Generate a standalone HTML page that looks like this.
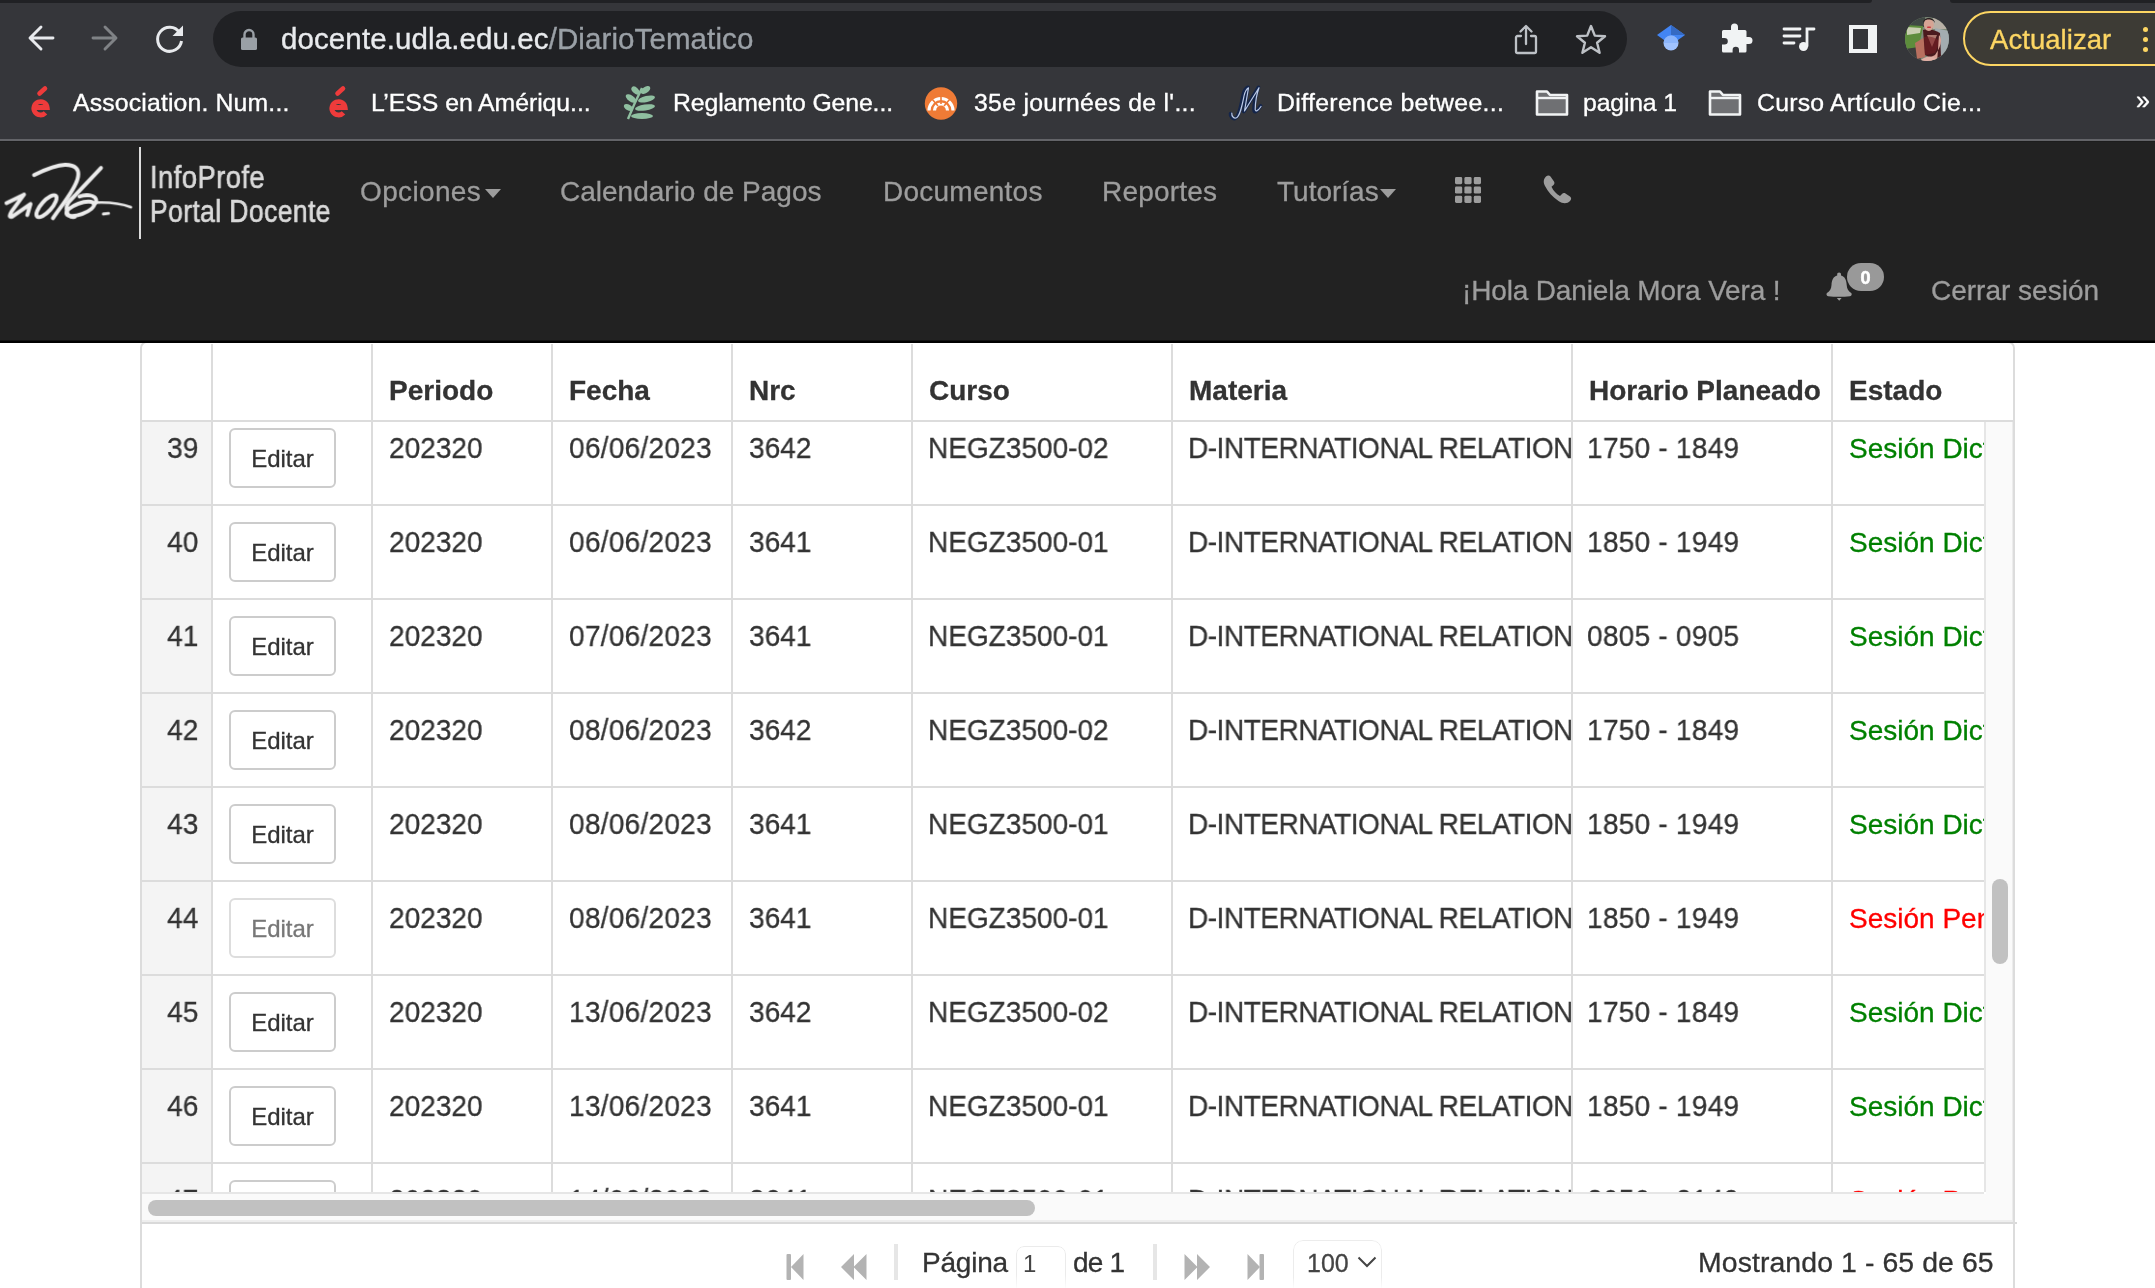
<!DOCTYPE html>
<html><head><meta charset="utf-8"><title>DiarioTematico</title>
<style>
html,body{margin:0;padding:0;}
body{width:2155px;height:1288px;overflow:hidden;position:relative;background:#ffffff;font-family:"Liberation Sans", sans-serif;}
.a{position:absolute;}
.t{position:absolute;white-space:pre;font-family:"Liberation Sans", sans-serif;will-change:transform;}
.c{-webkit-text-stroke:0.35px currentColor;}
.p{-webkit-text-stroke:0.3px currentColor;}
svg.a{overflow:visible;}
</style></head><body>
<div class="a" style="left:0px;top:0px;width:2155px;height:139px;background:#35363a"></div><div class="a" style="left:0px;top:0px;width:1872px;height:3px;background:#202124;border-bottom-right-radius:6px"></div><div class="a" style="left:1950px;top:0px;width:205px;height:3px;background:#202124;border-bottom-left-radius:6px"></div><div class="a" style="left:0px;top:139px;width:2155px;height:2px;background:#636468"></div><div class="a" style="left:0px;top:141px;width:2155px;height:1px;background:#1d1d1d"></div><svg class="a" style="left:26px;top:23px;" width="30" height="30" viewBox="0 0 30 30"><path d="M27 15H5 M15 4L4 15L15 26" stroke="#e8eaed" stroke-width="2.9" fill="none" stroke-linecap="round" stroke-linejoin="round"/></svg><svg class="a" style="left:90px;top:23px;" width="30" height="30" viewBox="0 0 30 30"><path d="M3 15H25 M15 4L26 15L15 26" stroke="#808386" stroke-width="2.9" fill="none" stroke-linecap="round" stroke-linejoin="round"/></svg><svg class="a" style="left:153px;top:22px;" width="34" height="34" viewBox="0 0 34 34"><path d="M26.5 10.5A12 12 0 1 0 28.5 19" stroke="#e8eaed" stroke-width="3" fill="none"/><path d="M30 3.5V14H19.5Z" fill="#e8eaed"/></svg><div class="a" style="left:213px;top:11px;width:1414px;height:56px;background:#202124;border-radius:28px"></div><svg class="a" style="left:240px;top:28px;" width="18" height="23" viewBox="0 0 18 23"><path d="M4.5 10V6.5a4.5 4.5 0 0 1 9 0V10" stroke="#9aa0a6" stroke-width="2.4" fill="none"/><rect x="1" y="9.5" width="16" height="12.5" rx="1.6" fill="#9aa0a6"/></svg><div class="t c" style="left:281px;top:24.32px;font-size:29.5px;line-height:29.5px;color:#e8eaed;font-weight:400;letter-spacing:0.1px"><span style="color:#e8eaed">docente.udla.edu.ec</span><span style="color:#9aa0a6">/DiarioTematico</span></div><svg class="a" style="left:1513px;top:23px;" width="28" height="33" viewBox="0 0 28 33"><path d="M8 13H4.5a1.5 1.5 0 0 0-1.5 1.5v14a1.5 1.5 0 0 0 1.5 1.5h17a1.5 1.5 0 0 0 1.5-1.5v-14a1.5 1.5 0 0 0-1.5-1.5H18" stroke="#bdc1c6" stroke-width="2.3" fill="none" stroke-linecap="round"/><path d="M13 21V3.5 M7.5 8.5L13 3L18.5 8.5" stroke="#bdc1c6" stroke-width="2.3" fill="none" stroke-linecap="round" stroke-linejoin="round"/></svg><svg class="a" style="left:1574px;top:23px;" width="34" height="32" viewBox="0 0 34 32"><path d="M17 3L20.8 12.6L31 13.3L23.1 19.8L25.6 29.8L17 24.3L8.4 29.8L10.9 19.8L3 13.3L13.2 12.6Z" stroke="#bdc1c6" stroke-width="2.4" fill="none" stroke-linejoin="round"/></svg><svg class="a" style="left:1655px;top:23px;" width="32" height="30" viewBox="0 0 32 30"><path d="M16 2L30 12H2Z" fill="#4285f4"/><path d="M16 2L30 12H16Z" fill="#356ac3"/><path d="M2 12L16 22L30 12Z" fill="#4285f4"/><circle cx="16" cy="20" r="7.5" fill="#a0c3ff"/><path d="M8.5 20a7.5 7.5 0 0 1 15 0" fill="#76a7fa" opacity="0.5"/></svg><svg class="a" style="left:1719px;top:22px;" width="32" height="33" viewBox="0 0 32 33"><path d="M12 5a3.5 3.5 0 0 1 7 0V8h7a1.5 1.5 0 0 1 1.5 1.5V15H30a3.5 3.5 0 0 1 0 7h-2.5v7a1.5 1.5 0 0 1-1.5 1.5h-6V28a3.2 3.2 0 0 0-6.4 0v2.5H4.5A1.5 1.5 0 0 1 3 29v-6.5h2.5a3.3 3.3 0 0 0 0-6.6H3V9.5A1.5 1.5 0 0 1 4.5 8H12Z" fill="#f1f3f4"/></svg><svg class="a" style="left:1781px;top:25px;" width="36" height="28" viewBox="0 0 36 28"><path d="M3 4H19 M3 11H19 M3 18H13" stroke="#f1f3f4" stroke-width="2.8" stroke-linecap="round"/><path d="M26 21V4H33" stroke="#f1f3f4" stroke-width="2.8" fill="none" stroke-linecap="round"/><circle cx="22.5" cy="21.5" r="4.5" fill="#f1f3f4"/></svg><svg class="a" style="left:1849px;top:25px;" width="28" height="28" viewBox="0 0 28 28"><rect x="0" y="0" width="28" height="28" fill="#f1f3f4"/><rect x="4" y="4" width="15" height="20" fill="#35363a"/></svg><svg class="a" style="left:1905px;top:17px;" width="44" height="44" viewBox="0 0 44 44"><defs><clipPath id="avc"><circle cx="22" cy="22" r="22"/></clipPath></defs><g clip-path="url(#avc)"><rect width="44" height="44" fill="#7d8a78"/><rect x="0" y="0" width="20" height="10" fill="#3f4843"/><rect x="28" y="0" width="16" height="12" fill="#b8b0a6"/><path d="M0 8L18 9L14 30L0 34Z" fill="#5d8d3c"/><path d="M2 10L16 11L15 16L2 18Z" fill="#c9cfb0"/><path d="M30 11L44 14V40L32 40Z" fill="#a3acb0"/><path d="M0 32L14 30L16 44H0Z" fill="#3c3d3c"/><path d="M10 26L20 20L20 40L12 42Z" fill="#b8705f"/><path d="M18 13C22 11 30 13 35 16L36 40L28 42L20 38Z" fill="#4a1a1e"/><path d="M22 18L27 30L32 18" fill="#d9a090" opacity="0.7"/><path d="M19 20C26 18 32 22 35 24L30 36L20 38Z" fill="#7a1f25" opacity="0.55"/><path d="M34 18C38 22 36 30 30 38L22 42L14 45L32 46Z" fill="#d8a397"/><path d="M15 44C20 38 30 38 33 44Z" fill="#e0b0a6"/><ellipse cx="23.8" cy="7.5" rx="5" ry="6.5" fill="#d6a494"/><path d="M18 6C18 0 29 -1 30 6L28.5 4C26 2 21 2 19.5 4Z" fill="#2a2122"/><rect x="22" y="9.5" width="4" height="1.6" rx="0.8" fill="#c8383e"/></g></svg><div class="a" style="left:1963px;top:11px;width:260px;height:51px;border:2px solid #fdd663;border-radius:28px;background:#3d3b35"></div><div class="t c" style="left:1989.5px;top:25.73px;font-size:27.5px;line-height:27.5px;color:#fdd663;font-weight:400;letter-spacing:0.05px">Actualizar</div><div class="a" style="left:2143px;top:27.0px;width:5px;height:5px;background:#fdd663;border-radius:50%"></div><div class="a" style="left:2143px;top:37.0px;width:5px;height:5px;background:#fdd663;border-radius:50%"></div><div class="a" style="left:2143px;top:47.0px;width:5px;height:5px;background:#fdd663;border-radius:50%"></div><svg class="a" style="left:31px;top:86px;" width="20" height="33" viewBox="0 0 20 33"><path d="M8.5 7.5L14 2.5" stroke="#ee3b3b" stroke-width="4.6" stroke-linecap="round"/><path d="M3.5 21.5H16.2A6.7 6.7 0 1 0 14.5 26.8" stroke="#ee3b3b" stroke-width="4.8" fill="none" stroke-linecap="butt"/></svg><svg class="a" style="left:329px;top:86px;" width="20" height="33" viewBox="0 0 20 33"><path d="M8.5 7.5L14 2.5" stroke="#ee3b3b" stroke-width="4.6" stroke-linecap="round"/><path d="M3.5 21.5H16.2A6.7 6.7 0 1 0 14.5 26.8" stroke="#ee3b3b" stroke-width="4.8" fill="none" stroke-linecap="butt"/></svg><div class="t c" style="left:73px;top:90.92px;font-size:24.8px;line-height:24.8px;color:#ffffff;font-weight:400;letter-spacing:0.15px">Association. Num...</div><div class="t c" style="left:371px;top:90.92px;font-size:24.8px;line-height:24.8px;color:#ffffff;font-weight:400;letter-spacing:-0.05px">L’ESS en Amériqu...</div><svg class="a" style="left:622px;top:86px;" width="38" height="34" viewBox="0 0 38 34"><path d="M6 33Q12 18 20 2" stroke="#8fbfa0" stroke-width="2.4" fill="none"/><ellipse cx="13.5" cy="4.5" rx="4.9" ry="3" transform="rotate(-135.0 13.5 4.5)" fill="#8fbfa0"/><ellipse cx="23.5" cy="4.0" rx="5.4" ry="3" transform="rotate(-33.7 23.5 4.0)" fill="#8fbfa0"/><ellipse cx="24.5" cy="13.0" rx="8.7" ry="3" transform="rotate(-13.2 24.5 13.0)" fill="#8fbfa0"/><ellipse cx="9.0" cy="12.5" rx="6.1" ry="3" transform="rotate(-145.0 9.0 12.5)" fill="#8fbfa0"/><ellipse cx="23.0" cy="21.5" rx="10.1" ry="3" transform="rotate(-8.5 23.0 21.5)" fill="#8fbfa0"/><ellipse cx="6.5" cy="21.5" rx="5.1" ry="3" transform="rotate(-150.9 6.5 21.5)" fill="#8fbfa0"/><ellipse cx="20.0" cy="30.0" rx="11.0" ry="3" transform="rotate(0.0 20.0 30.0)" fill="#8fbfa0"/></svg><div class="t c" style="left:673px;top:90.92px;font-size:24.8px;line-height:24.8px;color:#ffffff;font-weight:400;letter-spacing:-0.11px">Reglamento Gene...</div><svg class="a" style="left:924px;top:87px;" width="34" height="33" viewBox="0 0 34 33"><circle cx="17" cy="16.5" r="16.2" fill="#ef7b36"/><g stroke="#fff" stroke-width="3.2" fill="none"><path d="M5 23.5a12 12 0 0 1 24 0"/><path d="M10.5 23.5a6.5 6.5 0 0 1 13 0"/></g><g stroke="#ef7b36" stroke-width="1.6"><path d="M17 6V17"/><path d="M8 12L14 19"/><path d="M26 12L20 19"/></g></svg><div class="t c" style="left:973.5px;top:90.92px;font-size:24.8px;line-height:24.8px;color:#ffffff;font-weight:400;letter-spacing:0.3px">35e journées de l'...</div><svg class="a" style="left:1227px;top:86px;" width="36" height="34" viewBox="0 0 36 34"><path d="M3.5,27.6 C3,31 6,33 8,32.5 C12,31 14,20 16,10 C17,5 19,2 21,1.3 L16.8,25.5 L31.5,1.3 C29,8 27,18 27,24 C27,27 30,26 33.6,19.9" stroke="#14254a" stroke-width="3.6" fill="none" stroke-linejoin="round" stroke-linecap="round"/><path d="M4.8,27.2 C4.5,30.5 7,32.5 9,32 C13,30.5 15,20 17,10 C18,5.5 19.5,3 21.5,1.8 L17.5,25 L32,1.8 C29.8,8 28.3,18 28.2,23.5 C28.5,26 31,25 34,20.5" stroke="#b9c8e6" stroke-width="1.2" fill="none" stroke-linejoin="round" stroke-linecap="round"/></svg><div class="t c" style="left:1276.5px;top:90.92px;font-size:24.8px;line-height:24.8px;color:#ffffff;font-weight:400;letter-spacing:0.36px">Difference betwee...</div><svg class="a" style="left:1535px;top:89px;" width="34" height="28" viewBox="0 0 34 28"><path d="M2 25.5V2.5H12L15 6H32V25.5Z" stroke="#f1f3f4" stroke-width="2.6" fill="#6f7073" stroke-linejoin="round"/><path d="M2 9H32" stroke="#f1f3f4" stroke-width="2.4"/></svg><svg class="a" style="left:1708px;top:89px;" width="34" height="28" viewBox="0 0 34 28"><path d="M2 25.5V2.5H12L15 6H32V25.5Z" stroke="#f1f3f4" stroke-width="2.6" fill="#6f7073" stroke-linejoin="round"/><path d="M2 9H32" stroke="#f1f3f4" stroke-width="2.4"/></svg><div class="t c" style="left:1583px;top:90.92px;font-size:24.8px;line-height:24.8px;color:#ffffff;font-weight:400;letter-spacing:-0.16px">pagina 1</div><div class="t c" style="left:1756.5px;top:90.92px;font-size:24.8px;line-height:24.8px;color:#ffffff;font-weight:400;letter-spacing:0.23px">Curso Artículo Cie...</div><div class="t c" style="left:2136px;top:87.75px;font-size:25px;line-height:25px;color:#ffffff;font-weight:400;">»</div><div class="a" style="left:0px;top:142px;width:2155px;height:199px;background:#222222"></div><svg class="a" style="left:0px;top:150px" width="140" height="80" viewBox="0 0 2155 1231"><g stroke="#ebebeb" fill="none" stroke-width="60" stroke-linecap="round" stroke-linejoin="round" style="filter:blur(0.35px)"><path d="M100,815 L370,685 L175,950 Q120,1045 185,1025 L470,830 L420,1000"/><ellipse cx="715" cy="865" rx="215" ry="80" transform="rotate(-48 715 865)"/><path d="M815,1050 C950,850 1150,620 1195,440 C1235,290 1150,225 1000,228 C830,235 660,320 525,385"/><path d="M1555,275 L1060,800 C1000,870 1010,1050 1150,1030"/><ellipse cx="1235" cy="905" rx="225" ry="85" transform="rotate(-20 1235 905)"/><path d="M1225,715 C1320,680 1450,690 1475,755 C1490,800 1470,820 1450,830"/><path d="M1470,810 C1700,800 1880,830 2015,880" stroke-width="40"/><path d="M1590,985 L1670,975" stroke-width="45"/></g></svg><div class="a" style="left:139px;top:147px;width:2px;height:92px;background:#dcdcdc"></div><div class="t " style="left:150px;top:161.65px;font-size:31px;line-height:31px;color:#d9d9d9;font-weight:400;transform:scaleX(0.883);transform-origin:0 0;letter-spacing:0.5px;-webkit-text-stroke:0.7px #d9d9d9">InfoProfe</div><div class="t " style="left:150px;top:195.65px;font-size:31px;line-height:31px;color:#d9d9d9;font-weight:400;transform:scaleX(0.853);transform-origin:0 0;letter-spacing:0.5px;-webkit-text-stroke:0.7px #d9d9d9">Portal Docente</div><div class="t p" style="left:360px;top:178.20px;font-size:28px;line-height:28px;color:#9d9d9d;font-weight:400;letter-spacing:0.35px">Opciones</div><svg class="a" style="left:485px;top:189px;" width="16" height="10" viewBox="0 0 16 10"><path d="M0 0H16L8 9Z" fill="#9d9d9d"/></svg><div class="t p" style="left:560px;top:178.20px;font-size:28px;line-height:28px;color:#9d9d9d;font-weight:400;">Calendario de Pagos</div><div class="t p" style="left:882.5px;top:178.20px;font-size:28px;line-height:28px;color:#9d9d9d;font-weight:400;letter-spacing:0.25px">Documentos</div><div class="t p" style="left:1102px;top:178.20px;font-size:28px;line-height:28px;color:#9d9d9d;font-weight:400;letter-spacing:0.2px">Reportes</div><div class="t p" style="left:1276.5px;top:178.20px;font-size:28px;line-height:28px;color:#9d9d9d;font-weight:400;">Tutorías</div><svg class="a" style="left:1380px;top:189px;" width="15" height="9" viewBox="0 0 15 9"><path d="M0 0H16L8 9Z" fill="#9d9d9d"/></svg><svg class="a" style="left:1455px;top:177px;" width="26" height="26" viewBox="0 0 26 26"><rect x="0.0" y="0.0" width="7.2" height="7.2" rx="1.4" fill="#9d9d9d"/><rect x="9.4" y="0.0" width="7.2" height="7.2" rx="1.4" fill="#9d9d9d"/><rect x="18.8" y="0.0" width="7.2" height="7.2" rx="1.4" fill="#9d9d9d"/><rect x="0.0" y="9.4" width="7.2" height="7.2" rx="1.4" fill="#9d9d9d"/><rect x="9.4" y="9.4" width="7.2" height="7.2" rx="1.4" fill="#9d9d9d"/><rect x="18.8" y="9.4" width="7.2" height="7.2" rx="1.4" fill="#9d9d9d"/><rect x="0.0" y="18.8" width="7.2" height="7.2" rx="1.4" fill="#9d9d9d"/><rect x="9.4" y="18.8" width="7.2" height="7.2" rx="1.4" fill="#9d9d9d"/><rect x="18.8" y="18.8" width="7.2" height="7.2" rx="1.4" fill="#9d9d9d"/></svg><svg class="a" style="left:1540.5px;top:173px;" width="32" height="32" viewBox="0 0 32 32"><path d="M5 3.5C6.5 2 8.5 2 9.5 3.5L13 8.5C13.8 9.8 13.5 11 12.5 12L10.5 13.8C12.5 18 15 20.8 19 23L21 21C22 20 23.3 19.8 24.5 20.6L29 23.6C30.5 24.6 30.5 26.6 29 28C26 31 22 31 17.5 28C11.5 24 7 19 4 13C2 9 2.5 6 5 3.5Z" fill="#9d9d9d"/></svg><div class="t p" style="left:1462px;top:276.90px;font-size:28px;line-height:28px;color:#9d9d9d;font-weight:400;letter-spacing:-0.15px">¡Hola Daniela Mora Vera !</div><svg class="a" style="left:1826px;top:271px;" width="28" height="31" viewBox="0 0 28 31"><path d="M13.1 1.5C14.3 1.5 15 2.2 15 3.3V4.6C18.8 5.6 20.4 9 20.7 14C21 18 22.2 20.3 25.2 22C26.2 22.8 25.8 25 24 25.2C17 26 9 26 2.2 25.2C0.4 25 0 22.8 1 22C4 20.3 5.2 18 5.5 14C5.8 9 7.4 5.6 11.2 4.6V3.3C11.2 2.2 11.9 1.5 13.1 1.5Z" fill="#9d9d9d"/><path d="M10.8 27H15.6L13.2 29.8Z" fill="#9d9d9d"/></svg><div class="a" style="left:1847px;top:263px;width:37px;height:28px;border-radius:14px;background:#999999"></div><div class="t " style="left:1847px;top:268.70px;font-size:18px;line-height:18px;color:#ffffff;font-weight:700;width:37px;text-align:center;-webkit-text-stroke:0.6px #fff">0</div><div class="t p" style="left:1931px;top:276.90px;font-size:28px;line-height:28px;color:#9d9d9d;font-weight:400;">Cerrar sesión</div><div class="a" style="left:140px;top:341px;width:1871px;height:1000px;border:2px solid #dcdcdc;border-radius:7px;background:#fff"></div><div class="a" style="left:211px;top:344px;width:2px;height:76px;background:#dcdcdc"></div><div class="a" style="left:371px;top:344px;width:2px;height:76px;background:#dcdcdc"></div><div class="a" style="left:551px;top:344px;width:2px;height:76px;background:#dcdcdc"></div><div class="a" style="left:731px;top:344px;width:2px;height:76px;background:#dcdcdc"></div><div class="a" style="left:911px;top:344px;width:2px;height:76px;background:#dcdcdc"></div><div class="a" style="left:1171px;top:344px;width:2px;height:76px;background:#dcdcdc"></div><div class="a" style="left:1571px;top:344px;width:2px;height:76px;background:#dcdcdc"></div><div class="a" style="left:1831px;top:344px;width:2px;height:76px;background:#dcdcdc"></div><div class="a" style="left:142px;top:420px;width:1871px;height:2px;background:#dcdcdc"></div><div class="t p" style="left:388.5px;top:377.20px;font-size:28px;line-height:28px;color:#333333;font-weight:700;">Periodo</div><div class="t p" style="left:568.5px;top:377.20px;font-size:28px;line-height:28px;color:#333333;font-weight:700;">Fecha</div><div class="t p" style="left:748.5px;top:377.20px;font-size:28px;line-height:28px;color:#333333;font-weight:700;">Nrc</div><div class="t p" style="left:928.5px;top:377.20px;font-size:28px;line-height:28px;color:#333333;font-weight:700;">Curso</div><div class="t p" style="left:1189.0px;top:377.20px;font-size:28px;line-height:28px;color:#333333;font-weight:700;">Materia</div><div class="t p" style="left:1588.5px;top:377.20px;font-size:28px;line-height:28px;color:#333333;font-weight:700;">Horario Planeado</div><div class="t p" style="left:1848.5px;top:377.20px;font-size:28px;line-height:28px;color:#333333;font-weight:700;">Estado</div><div class="a" style="left:142px;top:422px;width:1842px;height:770px;overflow:hidden"><div class="a" style="left:0px;top:-10px;width:69px;height:92px;background:#f4f4f4"></div><div class="a" style="left:69px;top:-10px;width:2px;height:92px;background:#dcdcdc"></div><div class="a" style="left:229px;top:-10px;width:2px;height:92px;background:#dcdcdc"></div><div class="a" style="left:409px;top:-10px;width:2px;height:92px;background:#dcdcdc"></div><div class="a" style="left:589px;top:-10px;width:2px;height:92px;background:#dcdcdc"></div><div class="a" style="left:769px;top:-10px;width:2px;height:92px;background:#dcdcdc"></div><div class="a" style="left:1029px;top:-10px;width:2px;height:92px;background:#dcdcdc"></div><div class="a" style="left:1429px;top:-10px;width:2px;height:92px;background:#dcdcdc"></div><div class="a" style="left:1689px;top:-10px;width:2px;height:92px;background:#dcdcdc"></div><div class="a" style="left:0px;top:82px;width:1842px;height:2px;background:#dcdcdc"></div><div class="t p" style="left:24px;top:11.85px;font-size:29px;line-height:29px;color:#333333;font-weight:400;width:32px;text-align:right;transform:scaleX(0.966);transform-origin:100% 0">39</div><div class="a" style="left:87px;top:6px;width:103px;height:56px;border:2px solid #cccccc;border-radius:6px;background:#fff"></div><div class="t p" style="left:87px;top:24.80px;font-size:24px;line-height:24px;color:#333333;font-weight:400;width:107px;text-align:center">Editar</div><div class="t p" style="left:247px;top:11.85px;font-size:29px;line-height:29px;color:#333333;font-weight:400;transform:scaleX(0.966);transform-origin:0 0">202320</div><div class="t p" style="left:426.5px;top:11.85px;font-size:29px;line-height:29px;color:#333333;font-weight:400;letter-spacing:0.28px;transform:scaleX(0.966);transform-origin:0 0">06/06/2023</div><div class="t p" style="left:607px;top:11.85px;font-size:29px;line-height:29px;color:#333333;font-weight:400;transform:scaleX(0.966);transform-origin:0 0">3642</div><div class="t p" style="left:785.5px;top:11.85px;font-size:29px;line-height:29px;color:#333333;font-weight:400;transform:scaleX(0.966);transform-origin:0 0">NEGZ3500-02</div><div class="a" style="left:1047px;top:-10px;width:382px;height:92px;overflow:hidden"><div class="t p" style="left:-1.5px;top:21.85px;font-size:29px;line-height:29px;color:#333333;font-weight:400;letter-spacing:-0.49px;transform:scaleX(0.966);transform-origin:0 0">D-INTERNATIONAL RELATIONS</div></div><div class="t p" style="left:1445px;top:11.85px;font-size:29px;line-height:29px;color:#333333;font-weight:400;letter-spacing:0.26px;transform:scaleX(0.966);transform-origin:0 0">1750 - 1849</div><div class="t p" style="left:1707px;top:12.70px;font-size:28px;line-height:28px;color:#008000;font-weight:400;">Sesión Dictada</div><div class="a" style="left:0px;top:84px;width:69px;height:92px;background:#f4f4f4"></div><div class="a" style="left:69px;top:84px;width:2px;height:92px;background:#dcdcdc"></div><div class="a" style="left:229px;top:84px;width:2px;height:92px;background:#dcdcdc"></div><div class="a" style="left:409px;top:84px;width:2px;height:92px;background:#dcdcdc"></div><div class="a" style="left:589px;top:84px;width:2px;height:92px;background:#dcdcdc"></div><div class="a" style="left:769px;top:84px;width:2px;height:92px;background:#dcdcdc"></div><div class="a" style="left:1029px;top:84px;width:2px;height:92px;background:#dcdcdc"></div><div class="a" style="left:1429px;top:84px;width:2px;height:92px;background:#dcdcdc"></div><div class="a" style="left:1689px;top:84px;width:2px;height:92px;background:#dcdcdc"></div><div class="a" style="left:0px;top:176px;width:1842px;height:2px;background:#dcdcdc"></div><div class="t p" style="left:24px;top:105.85px;font-size:29px;line-height:29px;color:#333333;font-weight:400;width:32px;text-align:right;transform:scaleX(0.966);transform-origin:100% 0">40</div><div class="a" style="left:87px;top:100px;width:103px;height:56px;border:2px solid #cccccc;border-radius:6px;background:#fff"></div><div class="t p" style="left:87px;top:118.80px;font-size:24px;line-height:24px;color:#333333;font-weight:400;width:107px;text-align:center">Editar</div><div class="t p" style="left:247px;top:105.85px;font-size:29px;line-height:29px;color:#333333;font-weight:400;transform:scaleX(0.966);transform-origin:0 0">202320</div><div class="t p" style="left:426.5px;top:105.85px;font-size:29px;line-height:29px;color:#333333;font-weight:400;letter-spacing:0.28px;transform:scaleX(0.966);transform-origin:0 0">06/06/2023</div><div class="t p" style="left:607px;top:105.85px;font-size:29px;line-height:29px;color:#333333;font-weight:400;transform:scaleX(0.966);transform-origin:0 0">3641</div><div class="t p" style="left:785.5px;top:105.85px;font-size:29px;line-height:29px;color:#333333;font-weight:400;transform:scaleX(0.966);transform-origin:0 0">NEGZ3500-01</div><div class="a" style="left:1047px;top:84px;width:382px;height:92px;overflow:hidden"><div class="t p" style="left:-1.5px;top:21.85px;font-size:29px;line-height:29px;color:#333333;font-weight:400;letter-spacing:-0.49px;transform:scaleX(0.966);transform-origin:0 0">D-INTERNATIONAL RELATIONS</div></div><div class="t p" style="left:1445px;top:105.85px;font-size:29px;line-height:29px;color:#333333;font-weight:400;letter-spacing:0.26px;transform:scaleX(0.966);transform-origin:0 0">1850 - 1949</div><div class="t p" style="left:1707px;top:106.70px;font-size:28px;line-height:28px;color:#008000;font-weight:400;">Sesión Dictada</div><div class="a" style="left:0px;top:178px;width:69px;height:92px;background:#f4f4f4"></div><div class="a" style="left:69px;top:178px;width:2px;height:92px;background:#dcdcdc"></div><div class="a" style="left:229px;top:178px;width:2px;height:92px;background:#dcdcdc"></div><div class="a" style="left:409px;top:178px;width:2px;height:92px;background:#dcdcdc"></div><div class="a" style="left:589px;top:178px;width:2px;height:92px;background:#dcdcdc"></div><div class="a" style="left:769px;top:178px;width:2px;height:92px;background:#dcdcdc"></div><div class="a" style="left:1029px;top:178px;width:2px;height:92px;background:#dcdcdc"></div><div class="a" style="left:1429px;top:178px;width:2px;height:92px;background:#dcdcdc"></div><div class="a" style="left:1689px;top:178px;width:2px;height:92px;background:#dcdcdc"></div><div class="a" style="left:0px;top:270px;width:1842px;height:2px;background:#dcdcdc"></div><div class="t p" style="left:24px;top:199.85px;font-size:29px;line-height:29px;color:#333333;font-weight:400;width:32px;text-align:right;transform:scaleX(0.966);transform-origin:100% 0">41</div><div class="a" style="left:87px;top:194px;width:103px;height:56px;border:2px solid #cccccc;border-radius:6px;background:#fff"></div><div class="t p" style="left:87px;top:212.80px;font-size:24px;line-height:24px;color:#333333;font-weight:400;width:107px;text-align:center">Editar</div><div class="t p" style="left:247px;top:199.85px;font-size:29px;line-height:29px;color:#333333;font-weight:400;transform:scaleX(0.966);transform-origin:0 0">202320</div><div class="t p" style="left:426.5px;top:199.85px;font-size:29px;line-height:29px;color:#333333;font-weight:400;letter-spacing:0.28px;transform:scaleX(0.966);transform-origin:0 0">07/06/2023</div><div class="t p" style="left:607px;top:199.85px;font-size:29px;line-height:29px;color:#333333;font-weight:400;transform:scaleX(0.966);transform-origin:0 0">3641</div><div class="t p" style="left:785.5px;top:199.85px;font-size:29px;line-height:29px;color:#333333;font-weight:400;transform:scaleX(0.966);transform-origin:0 0">NEGZ3500-01</div><div class="a" style="left:1047px;top:178px;width:382px;height:92px;overflow:hidden"><div class="t p" style="left:-1.5px;top:21.85px;font-size:29px;line-height:29px;color:#333333;font-weight:400;letter-spacing:-0.49px;transform:scaleX(0.966);transform-origin:0 0">D-INTERNATIONAL RELATIONS</div></div><div class="t p" style="left:1445px;top:199.85px;font-size:29px;line-height:29px;color:#333333;font-weight:400;letter-spacing:0.26px;transform:scaleX(0.966);transform-origin:0 0">0805 - 0905</div><div class="t p" style="left:1707px;top:200.70px;font-size:28px;line-height:28px;color:#008000;font-weight:400;">Sesión Dictada</div><div class="a" style="left:0px;top:272px;width:69px;height:92px;background:#f4f4f4"></div><div class="a" style="left:69px;top:272px;width:2px;height:92px;background:#dcdcdc"></div><div class="a" style="left:229px;top:272px;width:2px;height:92px;background:#dcdcdc"></div><div class="a" style="left:409px;top:272px;width:2px;height:92px;background:#dcdcdc"></div><div class="a" style="left:589px;top:272px;width:2px;height:92px;background:#dcdcdc"></div><div class="a" style="left:769px;top:272px;width:2px;height:92px;background:#dcdcdc"></div><div class="a" style="left:1029px;top:272px;width:2px;height:92px;background:#dcdcdc"></div><div class="a" style="left:1429px;top:272px;width:2px;height:92px;background:#dcdcdc"></div><div class="a" style="left:1689px;top:272px;width:2px;height:92px;background:#dcdcdc"></div><div class="a" style="left:0px;top:364px;width:1842px;height:2px;background:#dcdcdc"></div><div class="t p" style="left:24px;top:293.85px;font-size:29px;line-height:29px;color:#333333;font-weight:400;width:32px;text-align:right;transform:scaleX(0.966);transform-origin:100% 0">42</div><div class="a" style="left:87px;top:288px;width:103px;height:56px;border:2px solid #cccccc;border-radius:6px;background:#fff"></div><div class="t p" style="left:87px;top:306.80px;font-size:24px;line-height:24px;color:#333333;font-weight:400;width:107px;text-align:center">Editar</div><div class="t p" style="left:247px;top:293.85px;font-size:29px;line-height:29px;color:#333333;font-weight:400;transform:scaleX(0.966);transform-origin:0 0">202320</div><div class="t p" style="left:426.5px;top:293.85px;font-size:29px;line-height:29px;color:#333333;font-weight:400;letter-spacing:0.28px;transform:scaleX(0.966);transform-origin:0 0">08/06/2023</div><div class="t p" style="left:607px;top:293.85px;font-size:29px;line-height:29px;color:#333333;font-weight:400;transform:scaleX(0.966);transform-origin:0 0">3642</div><div class="t p" style="left:785.5px;top:293.85px;font-size:29px;line-height:29px;color:#333333;font-weight:400;transform:scaleX(0.966);transform-origin:0 0">NEGZ3500-02</div><div class="a" style="left:1047px;top:272px;width:382px;height:92px;overflow:hidden"><div class="t p" style="left:-1.5px;top:21.85px;font-size:29px;line-height:29px;color:#333333;font-weight:400;letter-spacing:-0.49px;transform:scaleX(0.966);transform-origin:0 0">D-INTERNATIONAL RELATIONS</div></div><div class="t p" style="left:1445px;top:293.85px;font-size:29px;line-height:29px;color:#333333;font-weight:400;letter-spacing:0.26px;transform:scaleX(0.966);transform-origin:0 0">1750 - 1849</div><div class="t p" style="left:1707px;top:294.70px;font-size:28px;line-height:28px;color:#008000;font-weight:400;">Sesión Dictada</div><div class="a" style="left:0px;top:366px;width:69px;height:92px;background:#f4f4f4"></div><div class="a" style="left:69px;top:366px;width:2px;height:92px;background:#dcdcdc"></div><div class="a" style="left:229px;top:366px;width:2px;height:92px;background:#dcdcdc"></div><div class="a" style="left:409px;top:366px;width:2px;height:92px;background:#dcdcdc"></div><div class="a" style="left:589px;top:366px;width:2px;height:92px;background:#dcdcdc"></div><div class="a" style="left:769px;top:366px;width:2px;height:92px;background:#dcdcdc"></div><div class="a" style="left:1029px;top:366px;width:2px;height:92px;background:#dcdcdc"></div><div class="a" style="left:1429px;top:366px;width:2px;height:92px;background:#dcdcdc"></div><div class="a" style="left:1689px;top:366px;width:2px;height:92px;background:#dcdcdc"></div><div class="a" style="left:0px;top:458px;width:1842px;height:2px;background:#dcdcdc"></div><div class="t p" style="left:24px;top:387.85px;font-size:29px;line-height:29px;color:#333333;font-weight:400;width:32px;text-align:right;transform:scaleX(0.966);transform-origin:100% 0">43</div><div class="a" style="left:87px;top:382px;width:103px;height:56px;border:2px solid #cccccc;border-radius:6px;background:#fff"></div><div class="t p" style="left:87px;top:400.80px;font-size:24px;line-height:24px;color:#333333;font-weight:400;width:107px;text-align:center">Editar</div><div class="t p" style="left:247px;top:387.85px;font-size:29px;line-height:29px;color:#333333;font-weight:400;transform:scaleX(0.966);transform-origin:0 0">202320</div><div class="t p" style="left:426.5px;top:387.85px;font-size:29px;line-height:29px;color:#333333;font-weight:400;letter-spacing:0.28px;transform:scaleX(0.966);transform-origin:0 0">08/06/2023</div><div class="t p" style="left:607px;top:387.85px;font-size:29px;line-height:29px;color:#333333;font-weight:400;transform:scaleX(0.966);transform-origin:0 0">3641</div><div class="t p" style="left:785.5px;top:387.85px;font-size:29px;line-height:29px;color:#333333;font-weight:400;transform:scaleX(0.966);transform-origin:0 0">NEGZ3500-01</div><div class="a" style="left:1047px;top:366px;width:382px;height:92px;overflow:hidden"><div class="t p" style="left:-1.5px;top:21.85px;font-size:29px;line-height:29px;color:#333333;font-weight:400;letter-spacing:-0.49px;transform:scaleX(0.966);transform-origin:0 0">D-INTERNATIONAL RELATIONS</div></div><div class="t p" style="left:1445px;top:387.85px;font-size:29px;line-height:29px;color:#333333;font-weight:400;letter-spacing:0.26px;transform:scaleX(0.966);transform-origin:0 0">1850 - 1949</div><div class="t p" style="left:1707px;top:388.70px;font-size:28px;line-height:28px;color:#008000;font-weight:400;">Sesión Dictada</div><div class="a" style="left:0px;top:460px;width:69px;height:92px;background:#f4f4f4"></div><div class="a" style="left:69px;top:460px;width:2px;height:92px;background:#dcdcdc"></div><div class="a" style="left:229px;top:460px;width:2px;height:92px;background:#dcdcdc"></div><div class="a" style="left:409px;top:460px;width:2px;height:92px;background:#dcdcdc"></div><div class="a" style="left:589px;top:460px;width:2px;height:92px;background:#dcdcdc"></div><div class="a" style="left:769px;top:460px;width:2px;height:92px;background:#dcdcdc"></div><div class="a" style="left:1029px;top:460px;width:2px;height:92px;background:#dcdcdc"></div><div class="a" style="left:1429px;top:460px;width:2px;height:92px;background:#dcdcdc"></div><div class="a" style="left:1689px;top:460px;width:2px;height:92px;background:#dcdcdc"></div><div class="a" style="left:0px;top:552px;width:1842px;height:2px;background:#dcdcdc"></div><div class="t p" style="left:24px;top:481.85px;font-size:29px;line-height:29px;color:#333333;font-weight:400;width:32px;text-align:right;transform:scaleX(0.966);transform-origin:100% 0">44</div><div class="a" style="left:87px;top:476px;width:103px;height:56px;border:2px solid #dddddd;border-radius:6px;background:#fff"></div><div class="t p" style="left:87px;top:494.80px;font-size:24px;line-height:24px;color:#777777;font-weight:400;width:107px;text-align:center">Editar</div><div class="t p" style="left:247px;top:481.85px;font-size:29px;line-height:29px;color:#333333;font-weight:400;transform:scaleX(0.966);transform-origin:0 0">202320</div><div class="t p" style="left:426.5px;top:481.85px;font-size:29px;line-height:29px;color:#333333;font-weight:400;letter-spacing:0.28px;transform:scaleX(0.966);transform-origin:0 0">08/06/2023</div><div class="t p" style="left:607px;top:481.85px;font-size:29px;line-height:29px;color:#333333;font-weight:400;transform:scaleX(0.966);transform-origin:0 0">3641</div><div class="t p" style="left:785.5px;top:481.85px;font-size:29px;line-height:29px;color:#333333;font-weight:400;transform:scaleX(0.966);transform-origin:0 0">NEGZ3500-01</div><div class="a" style="left:1047px;top:460px;width:382px;height:92px;overflow:hidden"><div class="t p" style="left:-1.5px;top:21.85px;font-size:29px;line-height:29px;color:#333333;font-weight:400;letter-spacing:-0.49px;transform:scaleX(0.966);transform-origin:0 0">D-INTERNATIONAL RELATIONS</div></div><div class="t p" style="left:1445px;top:481.85px;font-size:29px;line-height:29px;color:#333333;font-weight:400;letter-spacing:0.26px;transform:scaleX(0.966);transform-origin:0 0">1850 - 1949</div><div class="t p" style="left:1707px;top:482.70px;font-size:28px;line-height:28px;color:#ff0000;font-weight:400;">Sesión Pendiente</div><div class="a" style="left:0px;top:554px;width:69px;height:92px;background:#f4f4f4"></div><div class="a" style="left:69px;top:554px;width:2px;height:92px;background:#dcdcdc"></div><div class="a" style="left:229px;top:554px;width:2px;height:92px;background:#dcdcdc"></div><div class="a" style="left:409px;top:554px;width:2px;height:92px;background:#dcdcdc"></div><div class="a" style="left:589px;top:554px;width:2px;height:92px;background:#dcdcdc"></div><div class="a" style="left:769px;top:554px;width:2px;height:92px;background:#dcdcdc"></div><div class="a" style="left:1029px;top:554px;width:2px;height:92px;background:#dcdcdc"></div><div class="a" style="left:1429px;top:554px;width:2px;height:92px;background:#dcdcdc"></div><div class="a" style="left:1689px;top:554px;width:2px;height:92px;background:#dcdcdc"></div><div class="a" style="left:0px;top:646px;width:1842px;height:2px;background:#dcdcdc"></div><div class="t p" style="left:24px;top:575.85px;font-size:29px;line-height:29px;color:#333333;font-weight:400;width:32px;text-align:right;transform:scaleX(0.966);transform-origin:100% 0">45</div><div class="a" style="left:87px;top:570px;width:103px;height:56px;border:2px solid #cccccc;border-radius:6px;background:#fff"></div><div class="t p" style="left:87px;top:588.80px;font-size:24px;line-height:24px;color:#333333;font-weight:400;width:107px;text-align:center">Editar</div><div class="t p" style="left:247px;top:575.85px;font-size:29px;line-height:29px;color:#333333;font-weight:400;transform:scaleX(0.966);transform-origin:0 0">202320</div><div class="t p" style="left:426.5px;top:575.85px;font-size:29px;line-height:29px;color:#333333;font-weight:400;letter-spacing:0.28px;transform:scaleX(0.966);transform-origin:0 0">13/06/2023</div><div class="t p" style="left:607px;top:575.85px;font-size:29px;line-height:29px;color:#333333;font-weight:400;transform:scaleX(0.966);transform-origin:0 0">3642</div><div class="t p" style="left:785.5px;top:575.85px;font-size:29px;line-height:29px;color:#333333;font-weight:400;transform:scaleX(0.966);transform-origin:0 0">NEGZ3500-02</div><div class="a" style="left:1047px;top:554px;width:382px;height:92px;overflow:hidden"><div class="t p" style="left:-1.5px;top:21.85px;font-size:29px;line-height:29px;color:#333333;font-weight:400;letter-spacing:-0.49px;transform:scaleX(0.966);transform-origin:0 0">D-INTERNATIONAL RELATIONS</div></div><div class="t p" style="left:1445px;top:575.85px;font-size:29px;line-height:29px;color:#333333;font-weight:400;letter-spacing:0.26px;transform:scaleX(0.966);transform-origin:0 0">1750 - 1849</div><div class="t p" style="left:1707px;top:576.70px;font-size:28px;line-height:28px;color:#008000;font-weight:400;">Sesión Dictada</div><div class="a" style="left:0px;top:648px;width:69px;height:92px;background:#f4f4f4"></div><div class="a" style="left:69px;top:648px;width:2px;height:92px;background:#dcdcdc"></div><div class="a" style="left:229px;top:648px;width:2px;height:92px;background:#dcdcdc"></div><div class="a" style="left:409px;top:648px;width:2px;height:92px;background:#dcdcdc"></div><div class="a" style="left:589px;top:648px;width:2px;height:92px;background:#dcdcdc"></div><div class="a" style="left:769px;top:648px;width:2px;height:92px;background:#dcdcdc"></div><div class="a" style="left:1029px;top:648px;width:2px;height:92px;background:#dcdcdc"></div><div class="a" style="left:1429px;top:648px;width:2px;height:92px;background:#dcdcdc"></div><div class="a" style="left:1689px;top:648px;width:2px;height:92px;background:#dcdcdc"></div><div class="a" style="left:0px;top:740px;width:1842px;height:2px;background:#dcdcdc"></div><div class="t p" style="left:24px;top:669.85px;font-size:29px;line-height:29px;color:#333333;font-weight:400;width:32px;text-align:right;transform:scaleX(0.966);transform-origin:100% 0">46</div><div class="a" style="left:87px;top:664px;width:103px;height:56px;border:2px solid #cccccc;border-radius:6px;background:#fff"></div><div class="t p" style="left:87px;top:682.80px;font-size:24px;line-height:24px;color:#333333;font-weight:400;width:107px;text-align:center">Editar</div><div class="t p" style="left:247px;top:669.85px;font-size:29px;line-height:29px;color:#333333;font-weight:400;transform:scaleX(0.966);transform-origin:0 0">202320</div><div class="t p" style="left:426.5px;top:669.85px;font-size:29px;line-height:29px;color:#333333;font-weight:400;letter-spacing:0.28px;transform:scaleX(0.966);transform-origin:0 0">13/06/2023</div><div class="t p" style="left:607px;top:669.85px;font-size:29px;line-height:29px;color:#333333;font-weight:400;transform:scaleX(0.966);transform-origin:0 0">3641</div><div class="t p" style="left:785.5px;top:669.85px;font-size:29px;line-height:29px;color:#333333;font-weight:400;transform:scaleX(0.966);transform-origin:0 0">NEGZ3500-01</div><div class="a" style="left:1047px;top:648px;width:382px;height:92px;overflow:hidden"><div class="t p" style="left:-1.5px;top:21.85px;font-size:29px;line-height:29px;color:#333333;font-weight:400;letter-spacing:-0.49px;transform:scaleX(0.966);transform-origin:0 0">D-INTERNATIONAL RELATIONS</div></div><div class="t p" style="left:1445px;top:669.85px;font-size:29px;line-height:29px;color:#333333;font-weight:400;letter-spacing:0.26px;transform:scaleX(0.966);transform-origin:0 0">1850 - 1949</div><div class="t p" style="left:1707px;top:670.70px;font-size:28px;line-height:28px;color:#008000;font-weight:400;">Sesión Dictada</div><div class="a" style="left:0px;top:742px;width:69px;height:92px;background:#f4f4f4"></div><div class="a" style="left:69px;top:742px;width:2px;height:92px;background:#dcdcdc"></div><div class="a" style="left:229px;top:742px;width:2px;height:92px;background:#dcdcdc"></div><div class="a" style="left:409px;top:742px;width:2px;height:92px;background:#dcdcdc"></div><div class="a" style="left:589px;top:742px;width:2px;height:92px;background:#dcdcdc"></div><div class="a" style="left:769px;top:742px;width:2px;height:92px;background:#dcdcdc"></div><div class="a" style="left:1029px;top:742px;width:2px;height:92px;background:#dcdcdc"></div><div class="a" style="left:1429px;top:742px;width:2px;height:92px;background:#dcdcdc"></div><div class="a" style="left:1689px;top:742px;width:2px;height:92px;background:#dcdcdc"></div><div class="a" style="left:0px;top:834px;width:1842px;height:2px;background:#dcdcdc"></div><div class="t p" style="left:24px;top:763.85px;font-size:29px;line-height:29px;color:#333333;font-weight:400;width:32px;text-align:right;transform:scaleX(0.966);transform-origin:100% 0">47</div><div class="a" style="left:87px;top:758px;width:103px;height:56px;border:2px solid #cccccc;border-radius:6px;background:#fff"></div><div class="t p" style="left:87px;top:776.80px;font-size:24px;line-height:24px;color:#333333;font-weight:400;width:107px;text-align:center">Editar</div><div class="t p" style="left:247px;top:763.85px;font-size:29px;line-height:29px;color:#333333;font-weight:400;transform:scaleX(0.966);transform-origin:0 0">202320</div><div class="t p" style="left:426.5px;top:763.85px;font-size:29px;line-height:29px;color:#333333;font-weight:400;letter-spacing:0.28px;transform:scaleX(0.966);transform-origin:0 0">14/06/2023</div><div class="t p" style="left:607px;top:763.85px;font-size:29px;line-height:29px;color:#333333;font-weight:400;transform:scaleX(0.966);transform-origin:0 0">3641</div><div class="t p" style="left:785.5px;top:763.85px;font-size:29px;line-height:29px;color:#333333;font-weight:400;transform:scaleX(0.966);transform-origin:0 0">NEGZ3500-01</div><div class="a" style="left:1047px;top:742px;width:382px;height:92px;overflow:hidden"><div class="t p" style="left:-1.5px;top:21.85px;font-size:29px;line-height:29px;color:#333333;font-weight:400;letter-spacing:-0.49px;transform:scaleX(0.966);transform-origin:0 0">D-INTERNATIONAL RELATIONS</div></div><div class="t p" style="left:1445px;top:763.85px;font-size:29px;line-height:29px;color:#333333;font-weight:400;letter-spacing:0.26px;transform:scaleX(0.966);transform-origin:0 0">2050 - 2149</div><div class="t p" style="left:1707px;top:764.70px;font-size:28px;line-height:28px;color:#ff0000;font-weight:400;">Sesión Pendiente</div></div><div class="a" style="left:1984px;top:422px;width:2px;height:770px;background:#e6e6e6"></div><div class="a" style="left:1986px;top:422px;width:27px;height:800px;background:#fafafa"></div><div class="a" style="left:1992px;top:879px;width:16px;height:85px;background:#c1c1c1;border-radius:8px"></div><div class="a" style="left:142px;top:1192px;width:1842px;height:2px;background:#e6e6e6"></div><div class="a" style="left:142px;top:1194px;width:1844px;height:26px;background:#fafafa"></div><div class="a" style="left:148px;top:1200px;width:887px;height:16px;background:#c1c1c1;border-radius:8px"></div><div class="a" style="left:142px;top:1220px;width:1871px;height:2px;background:#eeeeee"></div><div class="a" style="left:142px;top:1222px;width:1875px;height:2px;background:#d9d9d9"></div><div class="a" style="left:2012px;top:422px;width:1px;height:800px;background:#ececec"></div><div class="a" style="left:2013px;top:422px;width:2px;height:866px;background:#dcdcdc"></div><div class="a" style="left:0px;top:325px;width:2155px;height:15px;background:#222222"></div><div class="a" style="left:0px;top:340px;width:2155px;height:1px;background:#111111"></div><div class="a" style="left:0px;top:341px;width:2155px;height:2px;background:#000000"></div><svg class="a" style="left:786px;top:1254px;" width="18" height="26" viewBox="0 0 18 26"><rect x="0.5" y="0" width="4.5" height="26" rx="1" fill="#b3b3b3"/><path d="M17.5 0V26L5 13Z" fill="#b3b3b3"/></svg><svg class="a" style="left:840px;top:1254px;" width="27" height="26" viewBox="0 0 27 26"><path d="M14 0V26L1 13Z M26.5 0V26L13.5 13Z" fill="#b3b3b3"/></svg><div class="a" style="left:894px;top:1244px;width:4px;height:36px;background:#e6e6e6"></div><div class="t p" style="left:921.5px;top:1249.00px;font-size:28px;line-height:28px;color:#333333;font-weight:400;letter-spacing:-0.2px">Página</div><div class="a" style="left:1016px;top:1246px;width:48px;height:50px;border:1.5px solid #ebebeb;border-radius:8px;-webkit-mask-image:linear-gradient(180deg,#000 0,#000 55%,transparent 85%)"></div><div class="t " style="left:1022.5px;top:1251.90px;font-size:24px;line-height:24px;color:#444444;font-weight:400;">1</div><div class="t p" style="left:1073px;top:1249.00px;font-size:28px;line-height:28px;color:#333333;font-weight:400;letter-spacing:-0.8px">de 1</div><div class="a" style="left:1153px;top:1244px;width:4px;height:36px;background:#e6e6e6"></div><svg class="a" style="left:1184px;top:1254px;" width="27" height="26" viewBox="0 0 27 26"><path d="M0.5 0V26L13.5 13Z M13 0V26L26 13Z" fill="#b3b3b3"/></svg><svg class="a" style="left:1247px;top:1254px;" width="18" height="26" viewBox="0 0 18 26"><path d="M0.5 0V26L13 13Z" fill="#b3b3b3"/><rect x="12.5" y="0" width="4.5" height="26" rx="1" fill="#b3b3b3"/></svg><div class="a" style="left:1293px;top:1240px;width:87px;height:60px;border:1.5px solid #ececec;border-radius:10px;box-shadow:0 -1px 2px rgba(0,0,0,0.03);-webkit-mask-image:linear-gradient(180deg,#000 0,#000 60%,transparent 80%)"></div><div class="t p" style="left:1307px;top:1251.45px;font-size:25px;line-height:25px;color:#444444;font-weight:400;">100</div><svg class="a" style="left:1357px;top:1256px;" width="20" height="12" viewBox="0 0 20 12"><path d="M1.5 1.5L10 10L18.5 1.5" stroke="#444" stroke-width="2" fill="none"/></svg><div class="t p" style="left:1697.5px;top:1248.36px;font-size:28.4px;line-height:28.4px;color:#333333;font-weight:400;letter-spacing:0.1px">Mostrando 1 - 65 de 65</div>
</body></html>
